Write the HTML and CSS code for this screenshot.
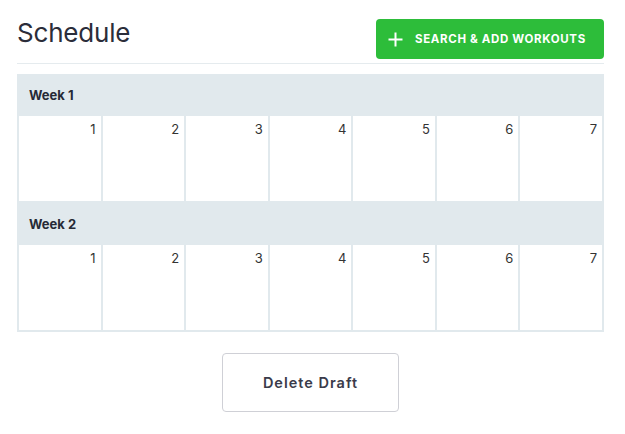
FILE: index.html
```html
<!DOCTYPE html>
<html>
<head>
<meta charset="utf-8">
<link rel="stylesheet" href="styles.css">
</head>
<body>
<div class="page">
  <header class="header">
    <h1 class="title">Schedule</h1>
    <button class="add-btn">
      <svg class="plus" width="15" height="15" viewBox="0 0 15 15"><path d="M7.5 0.5v14M0.5 7.5h14" stroke="#fff" stroke-width="2" fill="none"/></svg>
      <span>SEARCH &amp; ADD WORKOUTS</span>
    </button>
  </header>
  <section class="schedule">
    <div class="week">
      <div class="week-head">Week 1</div>
      <div class="days">
        <div class="day">1</div><div class="day">2</div><div class="day">3</div><div class="day">4</div><div class="day">5</div><div class="day">6</div><div class="day">7</div>
      </div>
    </div>
    <div class="week">
      <div class="week-head">Week 2</div>
      <div class="days">
        <div class="day">1</div><div class="day">2</div><div class="day">3</div><div class="day">4</div><div class="day">5</div><div class="day">6</div><div class="day">7</div>
      </div>
    </div>
  </section>
  <div class="actions">
    <button class="delete-btn">Delete Draft</button>
  </div>
</div>
</body>
</html>
```

FILE: styles.css
```css
* { box-sizing: border-box; }
html, body { margin: 0; padding: 0; background: #fff; }
body { font-family: Inter, "Liberation Sans", sans-serif; color: #2b2d3a; }
.page { width: 587px; margin-left: 17px; }
.header {
  display: flex;
  justify-content: space-between;
  align-items: flex-start;
  padding-top: 19px;
  padding-bottom: 4px;
  border-bottom: 1px solid #e5ebee;
}
.title {
  margin: 0;
  margin-top: -3px;
  font-size: 26px;
  font-weight: 400;
  line-height: 34px;
  color: #2b2d3a;
  letter-spacing: -0.2px;
}
.add-btn {
  display: flex;
  align-items: center;
  gap: 12px;
  width: 228px;
  height: 40px;
  padding: 0 0 0 12px;
  background: #2dbd3a;
  border: none;
  border-radius: 4px;
  color: #fff;
  font-family: Inter, "Liberation Sans", sans-serif;
  font-size: 11.5px;
  font-weight: 700;
  letter-spacing: 0.65px;
}
.plus { flex: none; }
.schedule { margin-top: 10px; }
.week-head {
  height: 42px;
  background: #e1e9ed;
  padding-left: 12px;
  display: flex;
  align-items: center;
  font-size: 13px;
  font-weight: 700;
  color: #262a36;
}
.days {
  display: grid;
  grid-template-columns: repeat(7, 1fr);
  gap: 2px;
  padding: 0 2px 2px 2px;
  background: #e1e9ed;
}
.day {
  background: #fff;
  height: 85px;
  text-align: right;
  padding: 5px 5px 0 0;
  font-size: 13px;
  line-height: 16px;
  color: #333;
}
.actions {
  display: flex;
  justify-content: center;
  margin-top: 21px;
}
.delete-btn {
  width: 177px;
  height: 59px;
  background: #fff;
  border: 1px solid #cfd0d6;
  border-radius: 4px;
  font-family: Inter, "Liberation Sans", sans-serif;
  font-size: 14.5px;
  font-weight: 600;
  letter-spacing: 1px;
  color: #3a3b4a;
}
```
